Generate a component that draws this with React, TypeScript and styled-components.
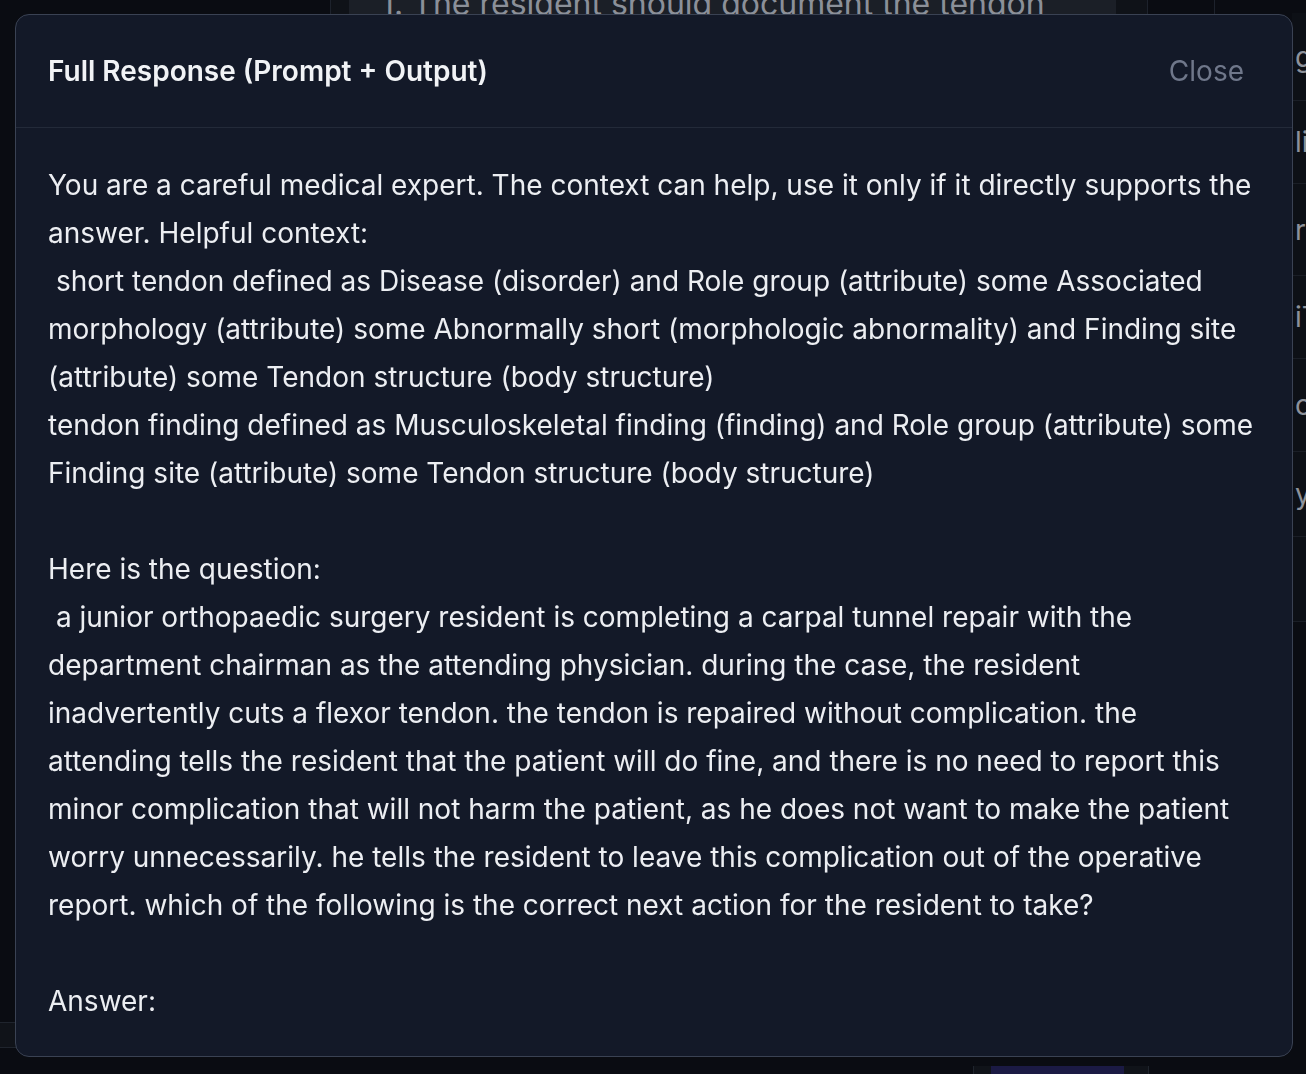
import styled, { createGlobalStyle } from 'styled-components'

const promptText = `You are a careful medical expert. The context can help, use it only if it directly supports the answer. Helpful context:
 short tendon defined as Disease (disorder) and Role group (attribute) some Associated morphology (attribute) some Abnormally short (morphologic abnormality) and Finding site (attribute) some Tendon structure (body structure)
tendon finding defined as Musculoskeletal finding (finding) and Role group (attribute) some Finding site (attribute) some Tendon structure (body structure)

Here is the question:
 a junior orthopaedic surgery resident is completing a carpal tunnel repair with the department chairman as the attending physician. during the case, the resident inadvertently cuts a flexor tendon. the tendon is repaired without complication. the attending tells the resident that the patient will do fine, and there is no need to report this minor complication that will not harm the patient, as he does not want to make the patient worry unnecessarily. he tells the resident to leave this complication out of the operative report. which of the following is the correct next action for the resident to take?

Answer:`

// rows of the results table behind the dialog, only their left edge shows
const sideRows = [
  { label: 'g', height: 88 },
  { label: 'li', height: 83 },
  { label: 'ri', height: 92 },
  { label: 'iT', height: 83 },
  { label: 'or', height: 93 },
  { label: 'y', height: 85 },
  { label: '', height: 85 },
]

const GlobalStyle = createGlobalStyle`
  html, body {
    margin: 0;
    padding: 0;
    background: #0a0c12;
    font-family: Inter, "Noto Sans", sans-serif;
  }
  * {
    box-sizing: border-box;
  }
`

const Page = styled.div`
  height: 100vh;
  overflow: hidden;
  display: flex;
  flex-direction: column;
  background: #0a0c12;
`

const TopRow = styled.div`
  display: flex;
  align-items: flex-start;
  margin-top: -34px;
  padding-left: 330px;
  gap: 66px;
`

const ChoiceCard = styled.div`
  display: flex;
  flex-shrink: 0;
  width: 818px;
  height: 80px;
  padding-left: 18px;
  border: 1px solid #1d222c;
  border-radius: 16px;
  background: #0f1218;
  overflow: hidden;
`

const ChoiceText = styled.div`
  flex-shrink: 0;
  width: 767px;
  padding: 17px 0 0 32px;
  background: #1b1f27;
  color: #8b9099;
  font-size: 32px;
  line-height: 40px;
  white-space: nowrap;
  overflow: hidden;
`

const GhostCard = styled.div`
  flex-shrink: 0;
  width: 200px;
  height: 80px;
  border: 1px solid #1d222c;
  border-radius: 16px;
`

const Body = styled.div`
  flex: 1;
  display: flex;
  margin-top: 6px;
`

const MainArea = styled.div`
  flex: 1;
  display: flex;
  flex-direction: column;
  justify-content: flex-end;
`

const FooterRow = styled.div`
  display: flex;
  align-items: flex-start;
  height: 62px;
  margin-bottom: -10px;
`

const FooterLeft = styled.div`
  width: 60px;
  height: 26px;
  border-top: 1px solid #1f242d;
  border-bottom: 1px solid #1f242d;
  background: #101319;
`

const SendWrap = styled.div`
  display: flex;
  margin-left: 913px;
  margin-top: 44px;
  width: 176px;
  height: 60px;
  padding-left: 17px;
  border-left: 1px solid #1f242d;
  border-right: 1px solid #1f242d;
  background: #101319;
`

const SendButton = styled.div`
  width: 133px;
  height: 60px;
  padding-top: 4px;
  background: #1b1a44;
  color: #6b6f80;
  font-size: 22px;
  text-align: center;
`

const SidePanel = styled.div`
  width: 14px;
  margin-top: -39px;
  display: flex;
  flex-direction: column;
  overflow: hidden;
`

const SideRow = styled.div<{ $h: number }>`
  flex-shrink: 0;
  height: ${p => p.$h}px;
  display: flex;
  align-items: center;
  padding-left: 3px;
  border-bottom: 1px solid #1a1e26;
  background: #0d1016;
  color: #8d929b;
  font-size: 28px;
  white-space: nowrap;
`

const Overlay = styled.div`
  position: fixed;
  inset: 0;
  display: flex;
  align-items: flex-start;
  justify-content: flex-start;
  padding: 14px 0 0 15px;
`

const Dialog = styled.div`
  width: 1278px;
  height: 1043px;
  display: flex;
  flex-direction: column;
  background: #131928;
  border: 1px solid #3a4253;
  border-radius: 14px;
  overflow: hidden;
`

const Header = styled.div`
  display: flex;
  align-items: center;
  justify-content: space-between;
  height: 113px;
  padding: 0 48px 0 32px;
  border-bottom: 1px solid #232a39;
  flex-shrink: 0;
`

const Title = styled.h2`
  margin: 0;
  color: #f1f3f6;
  font-size: 28px;
  font-weight: 600;
  line-height: 32px;
`

const CloseButton = styled.button`
  padding: 0;
  border: none;
  background: transparent;
  color: #6f778a;
  font-family: inherit;
  font-size: 28px;
  line-height: 32px;
  cursor: pointer;
`

const Content = styled.div`
  flex: 1;
  padding: 33px 32px 32px;
  overflow: hidden;
`

const PromptBody = styled.div`
  color: #eceef2;
  font-size: 28px;
  line-height: 48px;
  white-space: pre-wrap;
`

const App = () => {
  return (
    <>
      <GlobalStyle />
      <Page>
        <TopRow>
          <ChoiceCard>
            <ChoiceText>1. The resident should document the tendon</ChoiceText>
          </ChoiceCard>
          <GhostCard />
        </TopRow>
        <Body>
          <MainArea>
            <FooterRow>
              <FooterLeft />
              <SendWrap>
                <SendButton>Send</SendButton>
              </SendWrap>
            </FooterRow>
          </MainArea>
          <SidePanel>
            {sideRows.map((row, i) => (
              <SideRow key={i} $h={row.height}>
                {row.label}
              </SideRow>
            ))}
          </SidePanel>
        </Body>
      </Page>
      <Overlay>
        <Dialog>
          <Header>
            <Title>Full Response (Prompt + Output)</Title>
            <CloseButton>Close</CloseButton>
          </Header>
          <Content>
            <PromptBody>{promptText}</PromptBody>
          </Content>
        </Dialog>
      </Overlay>
    </>
  )
}

export default App
